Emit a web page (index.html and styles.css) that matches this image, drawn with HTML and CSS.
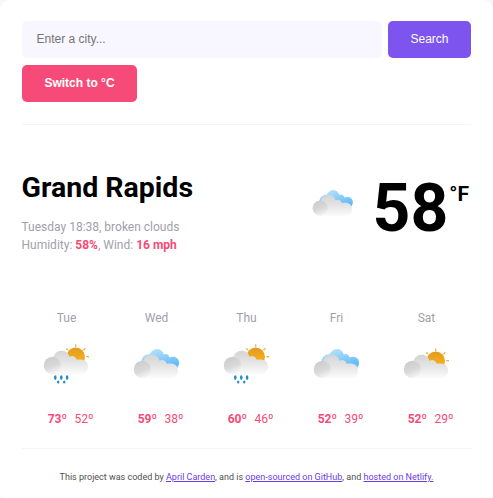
FILE: index.html
```html
<!DOCTYPE html>
<html lang="en">
<head>
<meta charset="utf-8">
<title>Weather</title>
<link rel="stylesheet" href="styles.css">
</head>
<body>
<svg class="defs" aria-hidden="true">
  <defs>
    <linearGradient id="cloud" gradientUnits="userSpaceOnUse" x1="0" y1="10" x2="0" y2="35">
      <stop offset="0" stop-color="#d3d3d3"/><stop offset=".5" stop-color="#e5e5e5"/><stop offset="1" stop-color="#fdfdfd"/>
    </linearGradient>
    <linearGradient id="puff" x1=".35" y1=".1" x2=".7" y2="1">
      <stop offset="0" stop-color="#cecece"/><stop offset=".5" stop-color="#d9d9d9"/><stop offset="1" stop-color="#f8f8f8"/>
    </linearGradient>
    <linearGradient id="sky" gradientUnits="userSpaceOnUse" x1="20" y1="5" x2="27" y2="26">
      <stop offset="0" stop-color="#b9e2fc"/><stop offset="1" stop-color="#63bbf6"/>
    </linearGradient>
    <linearGradient id="sun" x1="0" y1="0" x2="0" y2="1">
      <stop offset="0" stop-color="#e29a22"/><stop offset="1" stop-color="#fbbb14"/>
    </linearGradient>
    <g id="front">
      <path fill="url(#cloud)" d="M10.500 34V22.500C11.500 15 14.500 10.700 20 10.700C24.500 10.700 27 13 28 16.800C30.500 15 34 15.800 35.300 19.800C37 19.200 46.500 18.300 46.500 26.500C46.500 31 43.500 34 40 34Z"/>
      <circle cx="10.900" cy="25.400" r="8.600" fill="url(#puff)"/>
    </g>
    <g id="sunny">
      <circle cx="34.200" cy="16.900" r="9.300" fill="url(#sun)"/>
      <path d="M34.200 4.400V6.700M24.900 8.300L26.300 10.100M43.800 8.400L42 10.200M44.900 16.700H47.500" fill="none" stroke="#efaa20" stroke-width="1.300"/>
    </g>
    <symbol id="partly" viewBox="0.500 -4 50 50"><use href="#sunny"/><use href="#front"/></symbol>
    <symbol id="rain" viewBox="0.500 0 50 50">
      <use href="#sunny"/><use href="#front"/>
      <g fill="#268ccb">
        <ellipse cx="13.800" cy="37.600" rx="1.300" ry="2.400"/><ellipse cx="19.800" cy="37.600" rx="1.300" ry="2.400"/><ellipse cx="25.600" cy="37.600" rx="1.300" ry="2.400"/>
        <ellipse cx="16.700" cy="42" rx="1.200" ry="1.500"/><ellipse cx="22.700" cy="42" rx="1.200" ry="1.500"/>
      </g>
    </symbol>
    <symbol id="broken" viewBox="0.500 -4 50 50">
      <path fill="url(#sky)" d="M10 18C10 13 14 10 18 10.300C20 7 22.500 5 25.500 5C29 5 31.500 7.500 32.300 10.500C34.500 9 37.500 10.500 38 13.500C43.500 11.500 47.500 14.500 47.500 18.500C47.500 21 46.500 23 45 24.500L24 25L10 24Z"/>
      <use href="#front"/>
      <path fill="#fff" d="M46.300 24H50V36H46.300Z" opacity=".4"/>
    </symbol>
  </defs>
</svg>
<main class="card">
  <form class="search">
    <input class="city-input" type="text" placeholder="Enter a city...">
    <button class="button" type="button">Search</button>
  </form>
  <button class="button switch" type="button">Switch to °C</button>
  <section class="current">
    <div>
      <h1>Grand Rapids</h1>
      <p class="details">Tuesday 18:38, broken clouds<br>Humidity: <strong>58%</strong>, Wind: <strong>16 mph</strong></p>
    </div>
    <div class="reading">
      <svg class="current-icon"><use href="#broken"/></svg>
      <span class="temperature">58</span><span class="unit">°F</span>
    </div>
  </section>
  <section class="forecast">
    <div class="day"><span class="name">Tue</span><svg><use href="#rain"/></svg><p><strong>73º</strong><span>52º</span></p></div>
    <div class="day"><span class="name">Wed</span><svg><use href="#broken"/></svg><p><strong>59º</strong><span>38º</span></p></div>
    <div class="day"><span class="name">Thu</span><svg><use href="#rain"/></svg><p><strong>60º</strong><span>46º</span></p></div>
    <div class="day"><span class="name">Fri</span><svg><use href="#broken"/></svg><p><strong>52º</strong><span>39º</span></p></div>
    <div class="day"><span class="name">Sat</span><svg><use href="#partly"/></svg><p><strong>52º</strong><span>29º</span></p></div>
  </section>
  <footer>This project was coded by <a href="#">April Carden</a>, and is <a href="#">open-sourced on GitHub</a>, and <a href="#">hosted on Netlify.</a></footer>
</main>
</body>
</html>
```

FILE: styles.css
```css
* { box-sizing: border-box; }
html { background: #f8f6ff; }
body { margin: 0; font-family: Roboto, sans-serif; height: 498px; overflow: hidden; }
.defs { position: absolute; width: 0; height: 0; }
.card { height: 503px; padding: 21px 22px 0; background: #fff; border-radius: 10px; }
.search { display: flex; gap: 6px; margin: 0 0 7px; }
.city-input, .button {
  height: 37px;
  border: 0;
  border-radius: 5px;
  font: 12px "Liberation Sans", Arial, sans-serif;
}
.city-input { width: 360px; padding: 0 14.500px 2px; background: #f8f6ff; }
.city-input::placeholder { color: #757575; opacity: 1; }
.button { display: block; width: 83px; padding: 0 0 2px; background: #7d54ee; color: #fff; }
.switch { width: 115px; background: #f64b78; font-weight: 700; }
.current {
  display: flex;
  justify-content: space-between;
  height: 185px;
  margin-top: 22px;
  padding-top: 45px;
  border-top: 1px solid #f5f3fd;
}
h1 { margin: 1px 0 0 -.500px; font-size: 28.500px; line-height: 34px; font-weight: 700; }
.details { margin: 13px 0 0 -.500px; color: #a09fac; font-size: 12px; line-height: 18px; }
.details strong, .day p { color: #f64b78; }
.reading { display: flex; align-items: flex-start; padding-right: 2px; }
.current-icon { width: 44.500px; height: 44.500px; margin: 12px 17px 0 0; }
.temperature { margin-top: 6px; font-size: 66px; line-height: 66px; font-weight: 700; }
.unit { margin: 12px 0 0 1px; font-size: 21px; line-height: 24px; font-weight: 700; }
.forecast {
  display: grid;
  grid-template-columns: repeat(5, 90px);
  width: 450px;
  height: 140px;
  margin-left: -.500px;
  border-bottom: 1px solid #f5f3fd;
}
.day { display: flex; flex-direction: column; align-items: center; font-size: 12px; line-height: 18px; }
.name { color: #a09fac; }
.day svg { width: 50px; height: 50px; margin-top: 13px; }
.day p { display: flex; gap: 7.500px; margin: 20px 0 0; padding-left: 8px; }
footer { margin-top: 21px; color: #4f4f4f; font-size: 9px; line-height: 14px; text-align: center; }
footer a { color: #6b3be5; }
```
